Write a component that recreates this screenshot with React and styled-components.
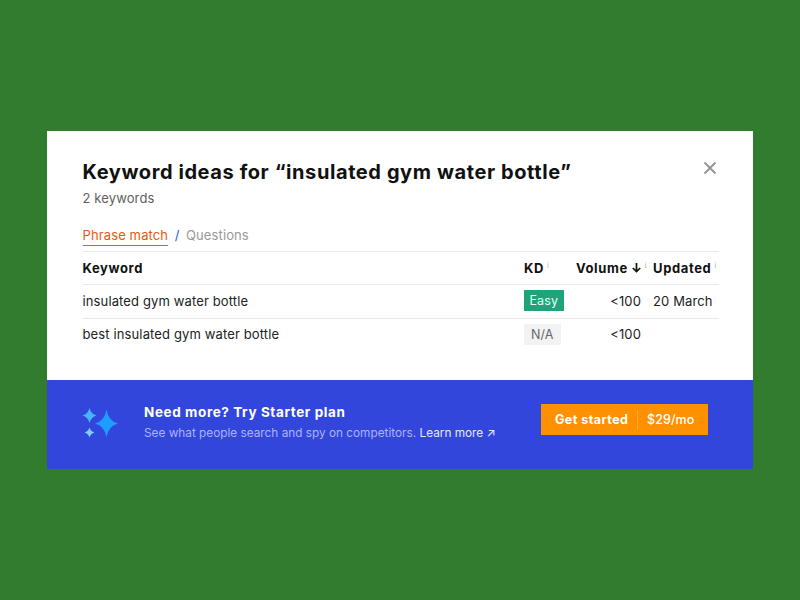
import React from 'react'
import styled, { createGlobalStyle } from 'styled-components'

const GlobalStyle = createGlobalStyle`
    html, body { margin: 0; padding: 0; height: 100%; }
    body { background: #317c2f; font-family: "Inter", "Liberation Sans", sans-serif; }
    #root { height: 100%; }
`

const Page = styled.div`
    width: 800px;
    height: 600px;
    display: flex;
    justify-content: center;
    padding-top: 131px;
    box-sizing: border-box;
`

const Modal = styled.div`
    width: 706px;
    height: 338px;
    background: #fff;
    display: flex;
    flex-direction: column;
`

const Body = styled.div`
    flex: 1;
    padding: 29px 34px 0 35.5px;
    position: relative;
`

const Title = styled.h2`
    margin: 0;
    font-size: 20px;
    line-height: 24px;
    font-weight: 700;
    letter-spacing: 0.59px;
    color: #111;
`

const Subtitle = styled.div`
    margin-top: 5px;
    font-size: 13px;
    line-height: 18px;
    letter-spacing: 0.12px;
    color: #606060;
`

const CloseButton = styled.button`
    position: absolute;
    top: 30px;
    right: 36px;
    width: 14px;
    height: 14px;
    padding: 0;
    border: none;
    background: none;
    display: flex;
`

const Tabs = styled.div`
    margin-top: 20px;
    display: flex;
    align-items: flex-start;
    font-size: 13px;
    line-height: 17px;
    letter-spacing: 0.12px;
`

const ActiveTab = styled.span`
    color: #e8590c;
    padding-bottom: 1px;
    border-bottom: 1px solid #e8590c;
`

const Slash = styled.span`
    color: #2f55e0;
    margin: 0 6.5px;
`

const Tab = styled.span`
    color: #999;
`

const Row = styled.div`
    display: grid;
    grid-template-columns: 441.5px 52px 65px 78px;
    height: 33.5px;
    padding-bottom: 1px;
    box-sizing: border-box;
    align-items: center;
    border-top: 1px solid #e9e9e9;
    font-size: 13px;
    letter-spacing: 0.13px;
    color: #222;
`

const HeadRow = styled(Row)`
    margin-top: 4.6px;
    padding-bottom: 0;
    font-weight: 700;
    color: #111;
    letter-spacing: 0.62px;
`

const HeadCell = styled.div`
    display: flex;
    align-items: center;
    gap: ${props => props.$gap || 3}px;
    white-space: nowrap;
`

const SortArrow = styled.svg`
    width: 11px;
    height: 11px;
    flex: none;
`

const VolumeCell = styled.div`
    text-align: right;
`

const DateCell = styled.div`
    padding-left: 12px;
    white-space: nowrap;
`

const UpdatedHead = styled(HeadCell)`
    padding-left: 12px;
`

const InfoMark = styled.span`
    font-size: 7px;
    font-weight: 400;
    color: #aaa;
    margin-top: -4px;
`

const Badge = styled.span`
    display: inline-block;
    padding: 0 ${props => props.$pad}px;
    height: 21px;
    line-height: 21px;
    font-size: 12.5px;
    background: ${props => props.$bg};
    color: ${props => props.$color};
    letter-spacing: 0.1px;
`

const Footer = styled.div`
    height: 89px;
    background: #3346dc;
    display: flex;
    align-items: center;
    padding: 0 45px 0 35px;
    box-sizing: border-box;
`

const Sparkles = styled.svg`
    width: 38px;
    height: 34px;
    flex: none;
`

const PromoText = styled.div`
    margin: 0 0 6px 24px;
    flex: 1;
`

const PromoTitle = styled.div`
    font-size: 13.5px;
    line-height: 18px;
    font-weight: 700;
    letter-spacing: 0.6px;
    color: #fff;
`

const PromoSub = styled.div`
    margin-top: 4px;
    font-size: 11.8px;
    line-height: 16px;
    color: #aab4f5;
    white-space: nowrap;
`

const LearnMore = styled.span`
    color: #e4e8ff;
`

const CtaButton = styled.button`
    width: 167px;
    height: 31px;
    margin-bottom: 10px;
    padding: 0;
    border: none;
    background: #ff9000;
    color: #fff;
    display: flex;
    align-items: center;
    font-family: inherit;
    font-size: 12.5px;
`

const CtaLabel = styled.span`
    padding: 0 8.5px 0 14px;
    font-weight: 700;
    letter-spacing: 0.46px;
    border-right: 1px solid #ffa733;
    line-height: 20px;
`

const CtaPrice = styled.span`
    padding-left: 9px;
    font-weight: 500;
    letter-spacing: 0.1px;
`

const rows = [
    { keyword: 'insulated gym water bottle', kd: 'Easy', volume: '<100', updated: '20 March' },
    { keyword: 'best insulated gym water bottle', kd: 'N/A', volume: '<100', updated: '' },
]

const App = () => (
    <Page>
        <GlobalStyle />
        <Modal>
            <Body>
                <Title>Keyword ideas for “insulated gym water bottle”</Title>
                <Subtitle>2 keywords</Subtitle>
                <CloseButton aria-label="Close">
                    <svg width="14" height="14" viewBox="0 0 14 14" fill="none">
                        <path d="M1.5 1.5l11 11M12.5 1.5l-11 11" stroke="#929292" strokeWidth="1.8" />
                    </svg>
                </CloseButton>
                <Tabs>
                    <ActiveTab>Phrase match</ActiveTab>
                    <Slash>/</Slash>
                    <Tab>Questions</Tab>
                </Tabs>
                <HeadRow>
                    <HeadCell>Keyword</HeadCell>
                    <HeadCell>KD <InfoMark>i</InfoMark></HeadCell>
                    <HeadCell $gap={3}>
                        Volume
                        <SortArrow viewBox="0 0 11 11" fill="none">
                            <path d="M5.5 1v8.5M1.8 6l3.7 3.5L9.2 6" stroke="#111" strokeWidth="1.7" />
                        </SortArrow>
                        <InfoMark>i</InfoMark>
                    </HeadCell>
                    <UpdatedHead>Updated <InfoMark>i</InfoMark></UpdatedHead>
                </HeadRow>
                {rows.map(row => (
                    <Row key={row.keyword}>
                        <div>{row.keyword}</div>
                        <div>
                            {row.kd === 'Easy'
                                ? <Badge $bg="#1fa37a" $color="#eafff6" $pad={5.5}>Easy</Badge>
                                : <Badge $bg="#f2f2f2" $color="#666" $pad={7}>N/A</Badge>}
                        </div>
                        <VolumeCell>{row.volume}</VolumeCell>
                        <DateCell>{row.updated}</DateCell>
                    </Row>
                ))}
            </Body>
            <Footer>
                <Sparkles viewBox="0 0 38 34">
                    <path d="M7.5 0Q9 6 14.5 7.5Q9 9 7.5 15Q6 9 0.500 7.500Q6 6 7.5 0Z" fill="#45b5ff" />
                    <path d="M24.500 1.500Q26.500 13 36 15.500Q26.500 18 24.500 29Q22.500 18 13 15.500Q22.500 13 24.500 1.500Z" fill="#1f9dff" />
                    <path d="M7.500 19.500Q8.700 23.300 12.500 24.500Q8.700 25.700 7.500 29.500Q6.300 25.700 2.500 24.500Q6.300 23.300 7.500 19.500Z" fill="#7ecbff" />
                </Sparkles>
                <PromoText>
                    <PromoTitle>Need more? Try Starter plan</PromoTitle>
                    <PromoSub>
                        See what people search and spy on competitors. <LearnMore>Learn more ↗</LearnMore>
                    </PromoSub>
                </PromoText>
                <CtaButton>
                    <CtaLabel>Get started</CtaLabel>
                    <CtaPrice>$29/mo</CtaPrice>
                </CtaButton>
            </Footer>
        </Modal>
    </Page>
)

export default App
